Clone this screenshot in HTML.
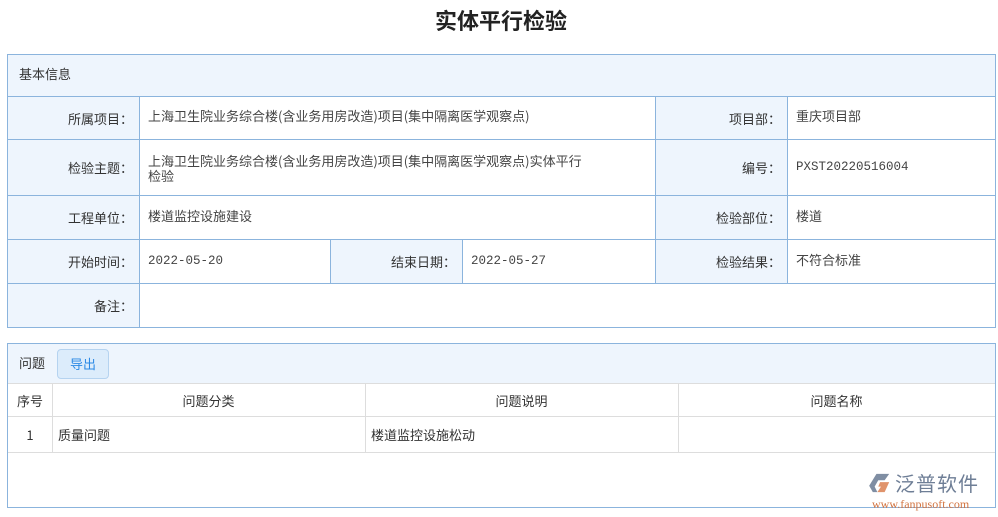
<!DOCTYPE html>
<html><head><meta charset="utf-8"><style>
body{margin:0;width:998px;height:517px;background:#fff;font-family:"Noto Sans CJK SC","Liberation Sans",sans-serif;font-size:13px;color:#333;position:relative;overflow:hidden}
.a{position:absolute;box-sizing:border-box}
h1{position:absolute;top:4px;left:0;width:1002px;text-align:center;margin:0;font-size:22px;font-weight:bold;color:#222}
.lb{background:#eef5fd;border:1px solid #8bb4dd;text-align:right;padding-right:6px;display:flex;align-items:center;justify-content:flex-end}
.vl{background:#fff;border:1px solid #8bb4dd;padding:0 8px;display:flex;align-items:center;color:#444;line-height:15px}
.m{font-family:"Liberation Mono",monospace;font-size:12.5px}
.th{border-right:1px solid #ddd;border-bottom:1px solid #ddd;display:flex;align-items:center;justify-content:center}
</style></head><body>
<h1>实体平行检验</h1>
<div class="a" style="left:7px;top:54px;width:989px;height:43px;background:#eef5fd;border:1px solid #8bb4dd;padding:9px 11px">基本信息</div>
<div class="a lb" style="left:7px;top:96px;width:133px;height:44px">所属项目：</div>
<div class="a vl" style="left:139px;top:96px;width:517px;height:44px;align-items:flex-start;padding-top:11px">上海卫生院业务综合楼(含业务用房改造)项目(集中隔离医学观察点)</div>
<div class="a lb" style="left:655px;top:96px;width:133px;height:44px">项目部：</div>
<div class="a vl" style="left:787px;top:96px;width:209px;height:44px;align-items:flex-start;padding-top:11px">重庆项目部</div>
<div class="a lb" style="left:7px;top:139px;width:133px;height:57px">检验主题：</div>
<div class="a vl" style="left:139px;top:139px;width:517px;height:57px">上海卫生院业务综合楼(含业务用房改造)项目(集中隔离医学观察点)实体平行<br>检验</div>
<div class="a lb" style="left:655px;top:139px;width:133px;height:57px">编号：</div>
<div class="a vl m" style="left:787px;top:139px;width:209px;height:57px">PXST20220516004</div>
<div class="a lb" style="left:7px;top:195px;width:133px;height:45px">工程单位：</div>
<div class="a vl" style="left:139px;top:195px;width:517px;height:45px;align-items:flex-start;padding-top:12px">楼道监控设施建设</div>
<div class="a lb" style="left:655px;top:195px;width:133px;height:45px">检验部位：</div>
<div class="a vl" style="left:787px;top:195px;width:209px;height:45px;align-items:flex-start;padding-top:12px">楼道</div>
<div class="a lb" style="left:7px;top:239px;width:133px;height:45px">开始时间：</div>
<div class="a vl m" style="left:139px;top:239px;width:192px;height:45px;align-items:flex-start;padding-top:14px">2022-05-20</div>
<div class="a lb" style="left:330px;top:239px;width:133px;height:45px">结束日期：</div>
<div class="a vl m" style="left:462px;top:239px;width:194px;height:45px;align-items:flex-start;padding-top:14px">2022-05-27</div>
<div class="a lb" style="left:655px;top:239px;width:133px;height:45px">检验结果：</div>
<div class="a vl" style="left:787px;top:239px;width:209px;height:45px;align-items:flex-start;padding-top:12px">不符合标准</div>
<div class="a lb" style="left:7px;top:283px;width:133px;height:45px">备注：</div>
<div class="a vl" style="left:139px;top:283px;width:857px;height:45px"></div>

<div class="a" style="left:7px;top:343px;width:989px;height:165px;border:1px solid #8bb4dd;background:#fff"></div>
<div class="a" style="left:8px;top:344px;width:987px;height:40px;background:#eef5fd;border-bottom:1px solid #ddd"></div>
<div class="a" style="left:19px;top:353px">问题</div>
<div class="a" style="left:57px;top:349px;width:52px;height:30px;background:#dcecfb;border:1px solid #b5d3f0;border-radius:4px;color:#2b8ae6;text-align:center;line-height:28px">导出</div>
<div class="a th" style="left:8px;top:384px;width:45px;height:33px">序号</div>
<div class="a th" style="left:52px;top:384px;width:314px;height:33px">问题分类</div>
<div class="a th" style="left:365px;top:384px;width:314px;height:33px">问题说明</div>
<div class="a th" style="left:678px;top:384px;width:317px;height:33px;border-right:none">问题名称</div>
<div class="a th" style="left:8px;top:416px;width:45px;height:37px">1</div>
<div class="a th" style="left:52px;top:416px;width:314px;height:37px;justify-content:flex-start;padding-left:6px">质量问题</div>
<div class="a th" style="left:365px;top:416px;width:314px;height:37px;justify-content:flex-start;padding-left:6px">楼道监控设施松动</div>
<div class="a th" style="left:678px;top:416px;width:317px;height:37px;border-right:none"></div>

<svg class="a" style="left:869px;top:473px" width="24" height="20" viewBox="0 0 26 22"><path d="M8 1h14l-5 7H10l-4 7 3 6H4L0 14z" fill="#7f8ea3"/><path d="M12 10h10l-5 11H9l4-6h-3z" fill="#e0936b"/></svg>
<div class="a" style="left:895px;top:471px;font-size:20px;color:#6e7e96;letter-spacing:1px;line-height:24px">泛普软件</div>
<div class="a" style="left:872px;top:497px;font-family:'Liberation Serif',serif;font-size:12px;color:#d2733f">www.fanpusoft.com</div>
</body></html>
